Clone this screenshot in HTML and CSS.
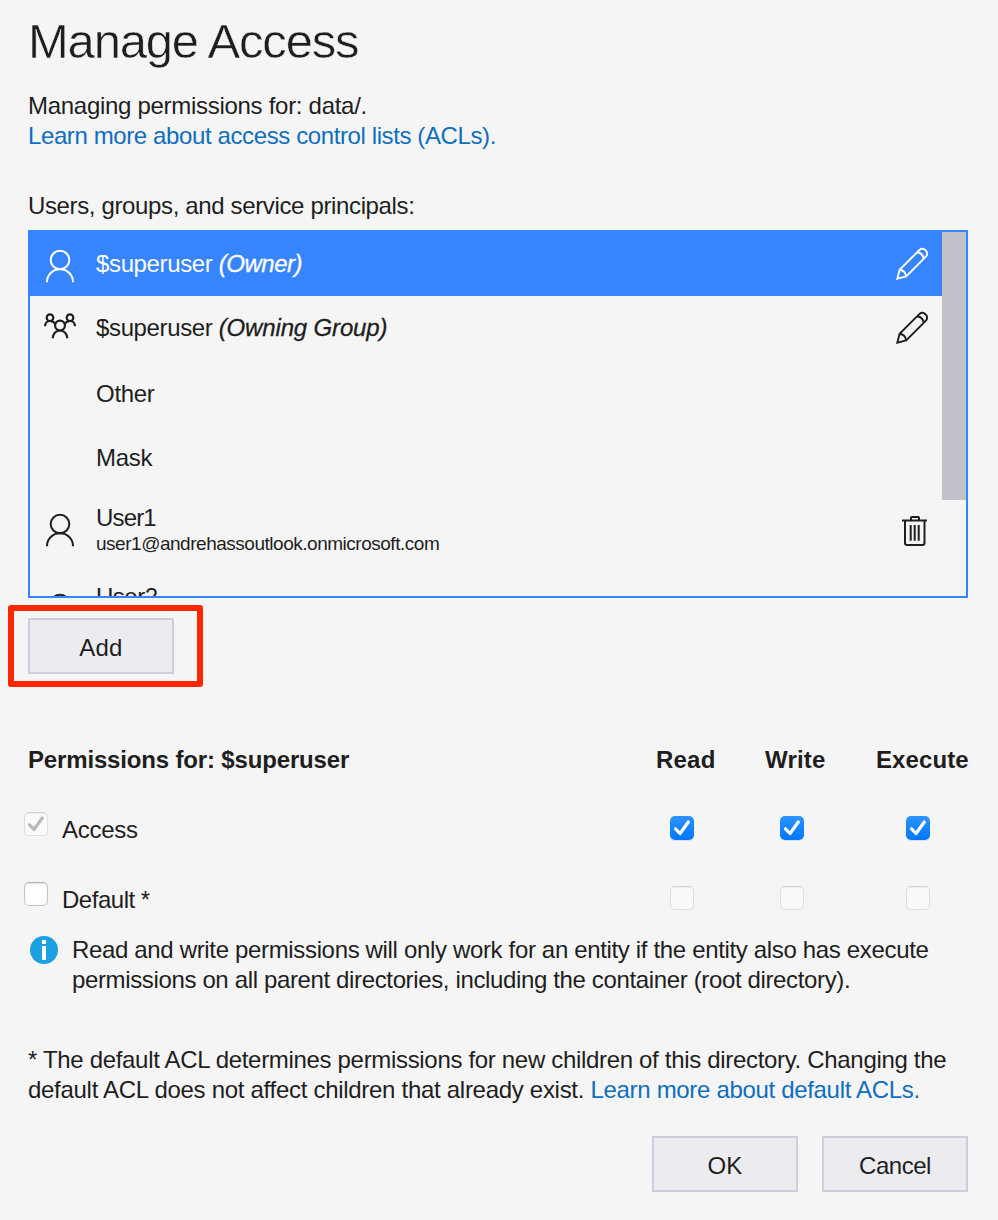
FILE: index.html
```
<!DOCTYPE html>
<html lang="en">
<head>
<meta charset="utf-8">
<title>Manage Access</title>
<link rel="stylesheet" href="styles.css">
</head>
<body>
<svg class="defs" width="0" height="0" aria-hidden="true">
  <symbol id="person" viewBox="0 0 32 36">
    <g fill="none" stroke="currentColor" stroke-width="2"><circle cx="16" cy="12" r="9.3"/><path d="M3 34.200C3 27 8.600 21.300 16 21.300S29 27 29 34.200"/></g>
  </symbol>
  <symbol id="group" viewBox="0 0 32 26">
    <g fill="none" stroke="currentColor" stroke-width="2.200"><circle cx="6" cy="4.700" r="3.300"/><circle cx="26" cy="4.700" r="3.300"/><circle cx="16" cy="12.600" r="4.900"/><path d="M1.100 13.300C1.100 10.300 3 8 6 8c2.500 0 4.400 1.200 5.300 3.300M30.900 13.300c0-3-1.900-5.300-4.900-5.300-2.500 0-4.400 1.200-5.300 3.300M8.800 25.300c0-4.500 3-7.800 7.200-7.800s7.200 3.300 7.200 7.800"/></g>
  </symbol>
  <symbol id="pencil" viewBox="0 0 34 34">
    <path fill="none" stroke="currentColor" stroke-width="1.900" d="M2.300 31.700 4.600 22.800 24.500 2.900C28.500-.4 34.300 4.900 31.100 9.500L11.200 29.400ZM4.600 22.800Q10.300 23.700 11.200 29.400M22.100 5.300Q27.900 6.100 28.700 11.900"/>
  </symbol>
  <symbol id="trash" viewBox="0 0 26 32">
    <g fill="none" stroke="currentColor" stroke-width="2"><path d="M0 5.500h25M3 5.500V28q0 2 2 2H20.500q2 0 2-2V5.500M9 5V3q0-1 1-1h6q1 0 1 1V5"/><path d="M8.700 10V25.700M12.700 10V25.700M16.700 10V25.700"/></g>
  </symbol>
  <symbol id="check" viewBox="0 0 24 24">
    <path fill="none" stroke="currentColor" stroke-width="3.200" stroke-linecap="round" stroke-linejoin="round" d="M5.500 12.800 10 17.500 18.300 6"/>
  </symbol>
</svg>
<main class="dialog">
  <h1 class="title">Manage Access</h1>
  <div class="intro">
    <p class="line n29">Managing permissions for: data/.</p>
    <p class="line n39"><a class="link">Learn more about access control lists (ACLs).</a></p>
  </div>
  <p class="line n36 list-label">Users, groups, and service principals:</p>

  <div class="list">
    <div class="items">
      <div class="item selected">
        <svg class="person"><use href="#person"/></svg>
        <div class="name"><span class="n36">$superuser </span><em class="n48">(Owner)</em></div>
        <svg class="pencil"><use href="#pencil"/></svg>
      </div>
      <div class="item owning">
        <svg class="group"><use href="#group"/></svg>
        <div class="name"><span class="n36">$superuser </span><em class="n16">(Owning Group)</em></div>
        <svg class="pencil"><use href="#pencil"/></svg>
      </div>
      <div class="item plain"><div class="name n29">Other</div></div>
      <div class="item plain"><div class="name n29">Mask</div></div>
      <div class="item user">
        <svg class="person"><use href="#person"/></svg>
        <div class="name"><div class="n85">User1</div><div class="email">user1@andrehassoutlook.onmicrosoft.com</div></div>
        <svg class="trash"><use href="#trash"/></svg>
      </div>
      <div class="item user next">
        <svg class="person"><use href="#person"/></svg>
        <div class="name"><div class="n48">User2</div></div>
      </div>
    </div>
    <div class="scroll-track"><div class="scroll-thumb"></div></div>
  </div>

  <div class="add-wrap">
    <button class="button p20">Add</button>
    <div class="highlight"></div>
  </div>

  <section class="permissions">
    <div class="perm-row head">
      <div class="n16">Permissions for: $superuser</div><div class="p20">Read</div><div class="p20">Write</div><div class="p10">Execute</div>
    </div>
    <div class="perm-row">
      <div class="label n29"><span class="box disabled"><svg><use href="#check"/></svg></span>Access</div>
      <div class="cell c1"><span class="box on"><svg><use href="#check"/></svg></span></div>
      <div class="cell c2"><span class="box on"><svg><use href="#check"/></svg></span></div>
      <div class="cell c3"><span class="box on"><svg><use href="#check"/></svg></span></div>
    </div>
    <div class="perm-row">
      <div class="label n48"><span class="box"></span>Default *</div>
      <div class="cell c1"><span class="box disabled"></span></div>
      <div class="cell c2"><span class="box disabled"></span></div>
      <div class="cell c3"><span class="box disabled"></span></div>
    </div>
  </section>

  <div class="info">
    <svg class="info-icon" viewBox="0 0 28 28"><circle cx="14" cy="14" r="14" fill="#1ba1e2"/><path fill="#fff" d="M12 4h4v4h-4zM12 10h4v14h-4z"/></svg>
    <div>
      <p class="line n34">Read and write permissions will only work for an entity if the entity also has execute</p>
      <p class="line n36">permissions on all parent directories, including the container (root directory).</p>
    </div>
  </div>

  <div class="note">
    <p class="line n32">* The default ACL determines permissions for new children of this directory. Changing the</p>
    <p class="line n29">default ACL does not affect children that already exist. <a class="link n32">Learn more about default ACLs.</a></p>
  </div>

  <div class="actions">
    <button class="button p20">OK</button>
    <button class="button n48">Cancel</button>
  </div>
</main>
</body>
</html>
```
FILE: styles.css
```
* { box-sizing: border-box; }
body {
  margin: 0;
  background: #f5f5f5;
  color: #1e1e1e;
  font: 24px/30px "Liberation Sans", Arial, sans-serif;
}
.defs { position: absolute; }
svg { display: block; flex: none; }
p, h1 { margin: 0; }
.dialog { width: 998px; height: 1220px; padding: 11px 30px 0 28px; overflow: hidden; }
.title { font-size: 49px; line-height: 60px; font-weight: 400; letter-spacing: -1.2px; -webkit-text-stroke: .5px #f5f5f5; }
.intro { margin-top: 20px; }
.line { white-space: nowrap; }
.link { color: #106ebe; text-decoration: none; }
.list-label { margin-top: 40px; }

/* Letter spacing steps: n = negative, p = positive, in hundredths of a pixel */
.n16 { letter-spacing: -.16px; }
.n29 { letter-spacing: -.29px; }
.n32 { letter-spacing: -.32px; }
.n34 { letter-spacing: -.34px; }
.n36 { letter-spacing: -.36px; }
.n39 { letter-spacing: -.39px; }
.n48 { letter-spacing: -.48px; }
.n85 { letter-spacing: -.85px; }
.p10 { letter-spacing: .1px; }
.p20 { letter-spacing: .2px; }

.list { display: flex; width: 940px; height: 368px; margin-top: 9px; border: 2px solid #3784ff; overflow: hidden; }
.items { flex: 1; }
.scroll-track { width: 24px; }
.scroll-thumb { height: 268px; background: #c1c1ca; }
.item { display: flex; height: 64px; padding: 16px 13px 0 14px; white-space: nowrap; }
.item.owning { height: 66px; }
.item.plain { padding-left: 66px; }
.item.user { height: 80px; padding-top: 12px; }
.item.selected { background: #3784ff; color: #fff; }
.name { flex: 1; padding-top: 1px; }
.next .name { padding-top: 0; }
.name em { -webkit-text-stroke: .3px currentColor; }
.email { margin-top: -4px; font-size: 19px; letter-spacing: -.48px; }
.person { width: 32px; height: 36px; margin-right: 20px; }
.user .person { margin-top: 10px; }
.group { width: 32px; height: 26px; margin: 1px 20px 0 0; }
.pencil { width: 34px; height: 34px; margin-top: -1px; }
.trash { width: 26px; height: 32px; margin: 13px 1px 0 0; }

.add-wrap { position: relative; margin-top: 20px; height: 56px; }
.highlight { position: absolute; left: -20px; top: -13px; width: 195px; height: 82px; border: 6px solid #ff2600; border-radius: 3px; }
.button {
  width: 146px; height: 56px; padding: 4px 0 0;
  border: 2px solid #cccedb; background: #ececf0; color: #1e1e1e;
  font-family: inherit; font-size: 24px; line-height: 30px;
}

.permissions { display: grid; row-gap: 40px; margin-top: 71px; }
.perm-row { display: grid; grid-template-columns: 628px 109px 111px 92px; height: 30px; white-space: nowrap; }
.head { font-weight: 700; }
.label { display: flex; gap: 14px; margin-left: -4px; }
.label .box { margin-top: -3px; }
.cell { padding-top: 1px; }
.c1 { padding-left: 14px; }
.c2 { padding-left: 15px; }
.c3 { padding-left: 30px; }
.box { display: block; width: 24px; height: 24px; border: 1px solid #c3c3c3; border-top-color: #b2b2b2; border-radius: 5px; background: #fff; box-shadow: inset 0 1px 2px #e3e3e3; }
.box.disabled { background: #fafafa; border-color: #dedede; border-top-color: #d3d3d3; box-shadow: inset 0 1px 1px #eee; color: #b9b9b9; }
.box.on { border: 0; background: linear-gradient(#2e93ff, #0077ff); color: #fff; box-shadow: 0 1px 1px #d4e1f2; }
.box svg { width: 24px; height: 24px; }
.box.disabled svg { margin: -1px; }

.info { display: flex; gap: 14px; margin-top: 20px; }
.info-icon { width: 28px; height: 28px; margin: 1px 0 0 2px; }
.note { margin-top: 50px; }
.actions { display: flex; justify-content: flex-end; gap: 24px; margin-top: 31px; }
```
